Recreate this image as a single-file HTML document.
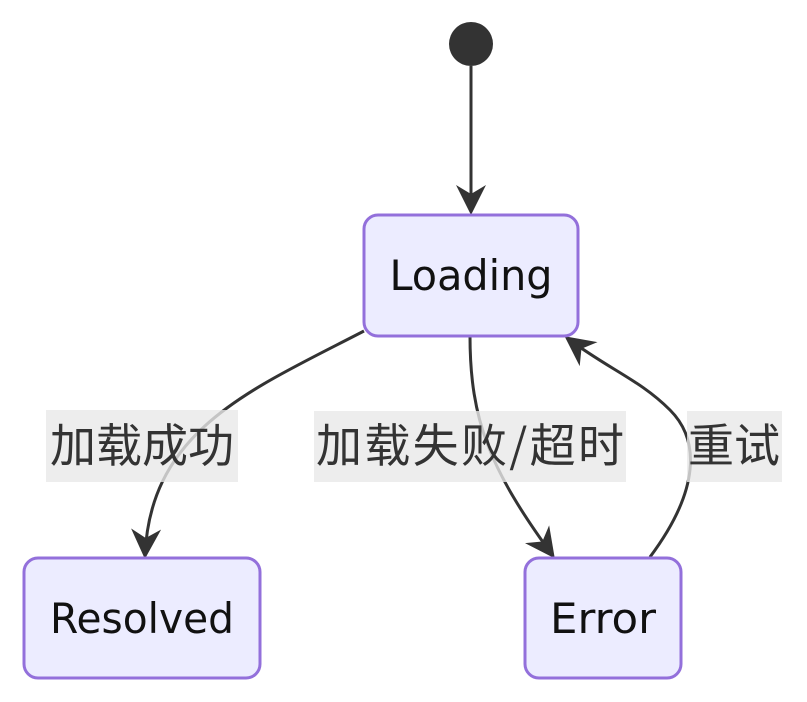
<!DOCTYPE html>
<html><head><meta charset="utf-8"><style>body{margin:0;background:#fff}</style></head><body>
<svg width="807" height="702" viewBox="0 0 807 702" xmlns="http://www.w3.org/2000/svg" style="display:block">
<defs><marker id="a" viewBox="0 0 20 20" refX="18" refY="10" markerWidth="30" markerHeight="30" markerUnits="userSpaceOnUse" orient="auto"><path d="M0,0 L20,10 L0,20 L6,10 Z" fill="#333"/></marker></defs>
<g fill="none" stroke="#333" stroke-width="3">
<path d="M471,66 L471,212" marker-end="url(#a)"/>
<path d="M364,331 C250,390 150,430 145,556" marker-end="url(#a)"/>
<path d="M470,336 C470,420 490,470 553,556" marker-end="url(#a)"/>
<path d="M650,557 C700,490 700,440 670,410 C640,380 610,370 567,338" marker-end="url(#a)"/>
</g>
<circle cx="471" cy="44" r="22" fill="#333"/>
<g fill="#ececff" stroke="#9370db" stroke-width="3">
<rect x="364" y="215" width="214" height="121" rx="14"/>
<rect x="24" y="558" width="236" height="120" rx="14"/>
<rect x="525" y="558" width="156" height="120" rx="14"/>
</g>
<g font-family="'DejaVu Sans','Noto Sans CJK SC',sans-serif" font-size="42" fill="#111" text-anchor="middle">
<text x="471" y="290" textLength="163" lengthAdjust="spacingAndGlyphs">Loading</text>
<text x="142" y="633" textLength="184" lengthAdjust="spacingAndGlyphs">Resolved</text>
<text x="603" y="633" textLength="106" lengthAdjust="spacingAndGlyphs">Error</text>
</g>
<g fill="rgba(232,232,232,0.8)">
<rect x="46" y="410" width="192" height="72"/>
<rect x="314" y="411" width="312" height="71"/>
<rect x="687" y="411" width="95" height="71"/>
</g>
<g font-family="'Noto Sans CJK SC',sans-serif" font-size="46" fill="#333" text-anchor="middle">
<text x="142" y="462">加载成功</text>
<text x="470" y="462" textLength="308">加载失败/超时</text>
<text x="734" y="462">重试</text>
</g>
</svg>
</body></html>
